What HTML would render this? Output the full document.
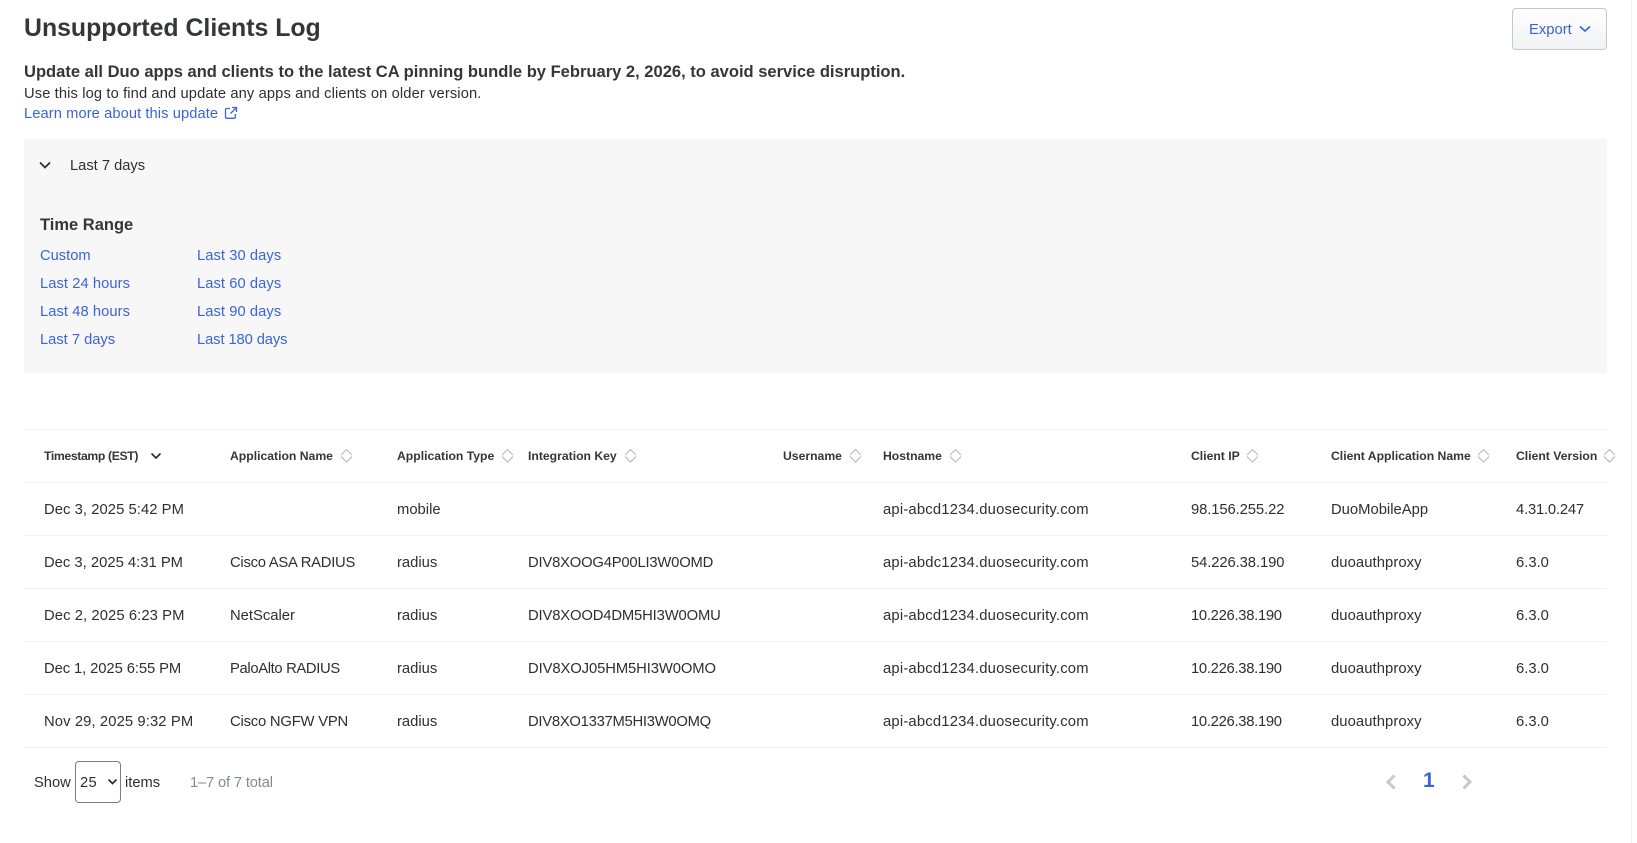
<!DOCTYPE html>
<html lang="en">
<head>
<meta charset="utf-8">
<title>Unsupported Clients Log</title>
<style>
*{box-sizing:border-box}
html,body{margin:0;padding:0;width:1637px;height:843px;overflow:hidden;background:#fff}
body{position:relative;font-family:"Liberation Sans",sans-serif;font-size:14.7px;color:#2e2f33}
.t{position:absolute;white-space:nowrap;line-height:20px}
a{color:#3a64d8;text-decoration:none}
h1{position:absolute;left:24px;top:13px;margin:0;font-size:24.85px;line-height:32px;font-weight:700;color:#35363b;white-space:nowrap}
.gutter{position:absolute;left:1631px;top:0;width:6px;height:843px;background:#fefefe;border-left:1px solid #f2f2f2}
.btn{position:absolute;left:1512px;top:8px;width:95px;height:42px;border:1px solid #c5c6d0;border-radius:4px;background:linear-gradient(#fff,#f1f2f4)}
.btn span{position:absolute;left:16px;top:11px;line-height:20px;color:#3a64d8;font-size:14.8px}
.panel{position:absolute;left:24px;top:139px;width:1583px;height:234px;background:#f7f7f7}
table{position:absolute;left:24px;top:429px;width:1583px;border-collapse:collapse;table-layout:fixed}
tr{height:53px}
th,td{padding:2px 0 0;text-align:left;white-space:nowrap;border-top:1px solid #f1f1f1;border-bottom:1px solid #f1f1f1;vertical-align:middle;overflow:visible}
th{font-size:12.2px;font-weight:700;color:#35363b}
td{font-size:14.8px}
th:first-child,td:first-child{padding-left:20px}
th svg{vertical-align:middle;margin-left:6px;position:relative;top:-1px}
td:nth-child(6){letter-spacing:.19px}
td:nth-child(4){letter-spacing:-.2px}
.sel{position:absolute;left:75px;top:761px;width:46px;height:42px;border:1px solid #7b7d85;border-radius:4px;background:#fff}
</style>
</head>
<body>
<h1>Unsupported Clients Log</h1>
<div class="btn"><span>Export</span>
<svg style="position:absolute;left:66px;top:15px" width="12" height="10" viewBox="0 0 12 10"><path d="M1 2.5 L6 7 L11 2.5" fill="none" stroke="#3a64d8" stroke-width="1.6"/></svg></div>

<div class="t" style="left:24px;top:62px;font-size:16.54px;font-weight:700;color:#35363b">Update all Duo apps and clients to the latest CA pinning bundle by February 2, 2026, to avoid service disruption.</div>
<div class="t" style="left:24px;top:84px;font-size:14.7px;letter-spacing:.12px">Use this log to find and update any apps and clients on older version.</div>
<a class="t" style="left:24px;top:104px;font-size:14.7px;letter-spacing:.08px" href="#">Learn more about this update</a>
<svg style="position:absolute;left:224px;top:106px" width="14" height="14" viewBox="0 0 14 14"><path d="M6 2.5 H2.8 A1.3 1.3 0 0 0 1.5 3.8 V11 A1.3 1.3 0 0 0 2.8 12.3 H10 A1.3 1.3 0 0 0 11.3 11 V8 M8 1.5 H12.5 V6 M12.3 1.7 L6.5 7.5" fill="none" stroke="#3a64d8" stroke-width="1.3"/></svg>

<div class="panel"></div>
<svg style="position:absolute;left:39px;top:160px" width="12" height="10" viewBox="0 0 12 10"><path d="M1 2.5 L6 7.5 L11 2.5" fill="none" stroke="#2e2f33" stroke-width="1.7"/></svg>
<div class="t" style="left:70px;top:156px;font-size:14.7px">Last 7 days</div>
<div class="t" style="left:40px;top:215px;font-size:16.5px;font-weight:700;color:#35363b">Time Range</div>
<a class="t" style="left:40px;top:246px" href="#">Custom</a>
<a class="t" style="left:40px;top:274px;letter-spacing:.08px" href="#">Last 24 hours</a>
<a class="t" style="left:40px;top:302px;letter-spacing:.08px" href="#">Last 48 hours</a>
<a class="t" style="left:40px;top:330px" href="#">Last 7 days</a>
<a class="t" style="left:197px;top:246px;letter-spacing:.08px" href="#">Last 30 days</a>
<a class="t" style="left:197px;top:274px;letter-spacing:.08px" href="#">Last 60 days</a>
<a class="t" style="left:197px;top:302px;letter-spacing:.08px" href="#">Last 90 days</a>
<a class="t" style="left:197px;top:330px;letter-spacing:-.08px" href="#">Last 180 days</a>

<svg width="0" height="0" style="position:absolute"><defs><g id="s"><path d="M1 7 L6.5 1.5 L12 7 M1 8.5 L6.5 14 L12 8.5" fill="none" stroke="#b4b6bd" stroke-width="1"/></g></defs></svg>

<table>
<colgroup><col style="width:206px"><col style="width:167px"><col style="width:131px"><col style="width:255px"><col style="width:100px"><col style="width:308px"><col style="width:140px"><col style="width:185px"><col style="width:91px"></colgroup>
<tr>
<th style="padding-top:0"><span style="letter-spacing:-.35px">Timestamp (EST)</span> <svg style="margin-left:9px" width="12" height="10" viewBox="0 0 12 10"><path d="M1.5 2.5 L6 7 L10.5 2.5" fill="none" stroke="#2e2f33" stroke-width="1.7"/></svg></th>
<th>Application Name<svg style="margin-left:7px" width="13" height="16" viewBox="0 0 13 16"><use href="#s"/></svg></th>
<th>Application Type<svg style="margin-left:7px" width="13" height="16" viewBox="0 0 13 16"><use href="#s"/></svg></th>
<th>Integration Key<svg style="margin-left:7px" width="13" height="16" viewBox="0 0 13 16"><use href="#s"/></svg></th>
<th>Username<svg style="margin-left:7px" width="13" height="16" viewBox="0 0 13 16"><use href="#s"/></svg></th>
<th>Hostname<svg style="margin-left:7px" width="13" height="16" viewBox="0 0 13 16"><use href="#s"/></svg></th>
<th>Client IP<svg style="margin-left:6px" width="13" height="16" viewBox="0 0 13 16"><use href="#s"/></svg></th>
<th>Client Application Name<svg width="13" height="16" viewBox="0 0 13 16"><use href="#s"/></svg></th>
<th>Client Version<svg width="13" height="16" viewBox="0 0 13 16"><use href="#s"/></svg></th>
</tr>
<tr><td style="letter-spacing:.05px">Dec 3, 2025 5:42 PM</td><td></td><td>mobile</td><td></td><td></td><td>api-abcd1234.duosecurity.com</td><td style="letter-spacing:-.1px">98.156.255.22</td><td>DuoMobileApp</td><td style="letter-spacing:-.2px">4.31.0.247</td></tr>
<tr><td>Dec 3, 2025 4:31 PM</td><td style="letter-spacing:-.25px">Cisco ASA RADIUS</td><td>radius</td><td>DIV8XOOG4P00LI3W0OMD</td><td></td><td>api-abdc1234.duosecurity.com</td><td style="letter-spacing:-.1px">54.226.38.190</td><td style="letter-spacing:.08px">duoauthproxy</td><td>6.3.0</td></tr>
<tr><td style="letter-spacing:.08px">Dec 2, 2025 6:23 PM</td><td>NetScaler</td><td>radius</td><td style="letter-spacing:-.15px">DIV8XOOD4DM5HI3W0OMU</td><td></td><td>api-abcd1234.duosecurity.com</td><td style="letter-spacing:-.3px">10.226.38.190</td><td style="letter-spacing:.08px">duoauthproxy</td><td>6.3.0</td></tr>
<tr><td style="letter-spacing:-.1px">Dec 1, 2025 6:55 PM</td><td style="letter-spacing:-.35px">PaloAlto RADIUS</td><td>radius</td><td style="letter-spacing:-.1px">DIV8XOJ05HM5HI3W0OMO</td><td></td><td>api-abcd1234.duosecurity.com</td><td style="letter-spacing:-.3px">10.226.38.190</td><td style="letter-spacing:.08px">duoauthproxy</td><td>6.3.0</td></tr>
<tr><td style="letter-spacing:.1px">Nov 29, 2025 9:32 PM</td><td style="letter-spacing:-.2px">Cisco NGFW VPN</td><td>radius</td><td style="letter-spacing:-.27px">DIV8XO1337M5HI3W0OMQ</td><td></td><td>api-abcd1234.duosecurity.com</td><td style="letter-spacing:-.3px">10.226.38.190</td><td style="letter-spacing:.08px">duoauthproxy</td><td>6.3.0</td></tr>
</table>

<div class="t" style="left:34px;top:773px">Show</div>
<div class="sel"></div>
<div class="t" style="left:80px;top:773px;letter-spacing:.3px">25</div>
<svg style="position:absolute;left:107px;top:778px" width="11" height="8" viewBox="0 0 11 8"><path d="M1.5 1.5 L5.5 5.5 L9.5 1.5" fill="none" stroke="#2e2f33" stroke-width="1.7"/></svg>
<div class="t" style="left:125px;top:773px">items</div>
<div class="t" style="left:190px;top:773px;color:#858994;letter-spacing:-.15px">1–7 of 7 total</div>

<svg style="position:absolute;left:1384px;top:773px" width="13" height="18" viewBox="0 0 13 18"><path d="M10.5 2.5 L4 9 L10.5 15.5" fill="none" stroke="#c6c8cf" stroke-width="3"/></svg>
<div class="t" style="left:1423px;top:771px;font-size:21px;font-weight:700;color:#3a64d8">1</div>
<svg style="position:absolute;left:1461px;top:773px" width="13" height="18" viewBox="0 0 13 18"><path d="M2.5 2.5 L9 9 L2.5 15.5" fill="none" stroke="#c6c8cf" stroke-width="3"/></svg>

<div class="gutter"></div>
</body>
</html>
